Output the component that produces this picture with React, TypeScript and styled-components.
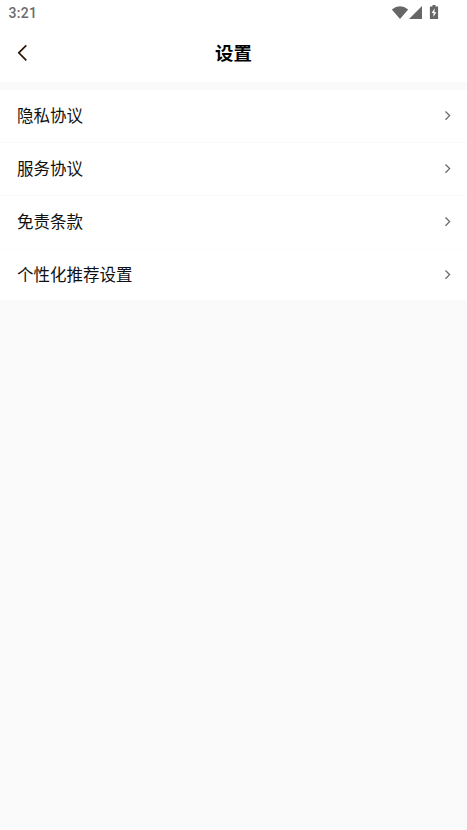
import React from "react";
import styled, { createGlobalStyle } from "styled-components";

const Global = createGlobalStyle`
  * { box-sizing: border-box; }
  body { margin: 0; background: #fafafa; font-family: Roboto, "Noto Sans CJK SC", sans-serif; }
`;
const Screen = styled.main`
  min-height: 830px;
  background: #fafafa;
`;
const StatusBar = styled.div`
  height: 25px;
  padding: 0 28px 0 8.5px;
  display: flex;
  align-items: center;
  justify-content: space-between;
  background: #fff;
  color: #6b6b6b;
  font-size: 14px;
  font-weight: 500;
  letter-spacing: 0.3px;
`;
const StatusIcons = styled.svg`
  display: block;
  width: 48px;
  height: 25px;
`;
const Header = styled.header`
  height: 57px;
  display: grid;
  grid-template-columns: 48px 1fr 48px;
  align-items: center;
  background: #fff;
`;
const BackButton = styled.button`
  width: 48px;
  height: 57px;
  padding: 0;
  border: 0;
  background: none;
  svg { display: block; }
`;
const Title = styled.h1`
  margin: 0;
  padding-top: 1px;
  text-align: center;
  font-size: 18.4px;
  line-height: 24px;
  font-weight: 700;
  color: #000;
`;
const List = styled.ul`
  margin: 8px 0 0;
  padding: 0;
  list-style: none;
  background: #fff;
`;
const Row = styled.li`
  height: 53px;
  padding: 0 15px 0 17px;
  display: flex;
  align-items: center;
  justify-content: space-between;
  border-bottom: 1px solid #fafafa;
  font-size: 16.5px;
  line-height: 24px;
  color: #111;
  &:nth-child(3) { border-bottom-color: #fdfdfd; }
  &:last-child { height: 51px; border-bottom: 0; }
`;
const Label = styled.span`
  padding-top: 2px;
`;

const items = ["隐私协议", "服务协议", "免责条款", "个性化推荐设置"];

export default function App() {
  return (
    <Screen>
      <Global />
      <StatusBar>
        <span>3:21</span>
        <StatusIcons viewBox="0 0 48 25" fill="#666">
          <path d="M0.8 9.4Q9 3 17.2 9.4L9 19Z" />
          <path d="M18 19L31 6V19Z" />
          <path d="M41.500 5h3v1.500h2.600V19h-8.200V6.500h2.600Z" />
          <path d="M43.700 8.300L40.600 13H42.600L42.200 17L45.400 12.200H43.400Z" fill="#fff" />
        </StatusIcons>
      </StatusBar>
      <Header>
        <BackButton aria-label="返回">
          <svg width="48" height="57" fill="none" stroke="#2b160a" strokeWidth="1.7">
            <path d="M26.300 20.300L18.800 27.800L26.300 35.300" />
          </svg>
        </BackButton>
        <Title>设置</Title>
      </Header>
      <List>
        {items.map((item) => (
          <Row key={item}>
            <Label>{item}</Label>
            <svg width="8" height="12" fill="none" stroke="#666" strokeWidth="1.25">
              <path d="M1.500 1.500L5.600 5.600L1.500 9.700" />
            </svg>
          </Row>
        ))}
      </List>
    </Screen>
  );
}
